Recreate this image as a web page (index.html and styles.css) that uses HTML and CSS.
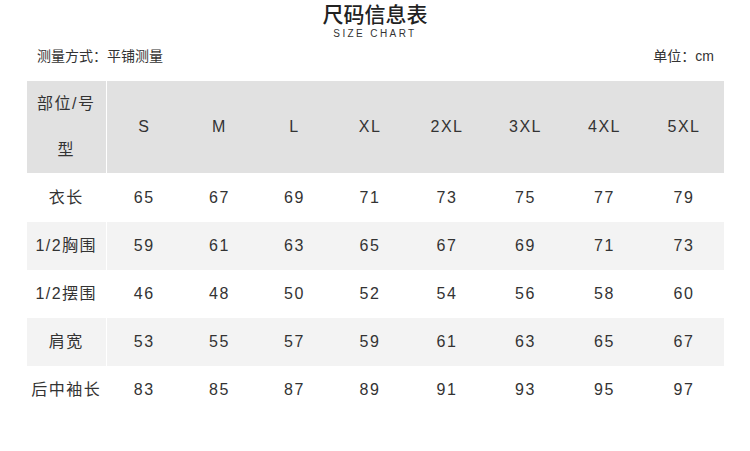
FILE: index.html
```html
<!DOCTYPE html>
<html lang="zh-CN">
<head>
<meta charset="utf-8">
<title>尺码信息表</title>
<link rel="stylesheet" href="styles.css">
</head>
<body>
<div class="page">
  <header class="head">
    <h1 class="title">尺码信息表</h1>
    <div class="subtitle">SIZE CHART</div>
  </header>
  <div class="meta">
    <span>测量方式：平铺测量</span>
    <span>单位：cm</span>
  </div>
  <table class="chart">
    <colgroup>
      <col class="c-label"><col class="c-s"><col class="c-m"><col class="c-l"><col class="c-xl"><col class="c-2xl"><col class="c-3xl"><col class="c-4xl"><col class="c-5xl">
    </colgroup>
    <thead>
      <tr>
        <th class="label">部位/号<br>型</th>
        <th>S</th><th>M</th><th>L</th><th>XL</th><th>2XL</th><th>3XL</th><th>4XL</th><th>5XL</th>
      </tr>
    </thead>
    <tbody>
      <tr><td class="label">衣长</td><td>65</td><td>67</td><td>69</td><td>71</td><td>73</td><td>75</td><td>77</td><td>79</td></tr>
      <tr><td class="label">1/2胸围</td><td>59</td><td>61</td><td>63</td><td>65</td><td>67</td><td>69</td><td>71</td><td>73</td></tr>
      <tr><td class="label">1/2摆围</td><td>46</td><td>48</td><td>50</td><td>52</td><td>54</td><td>56</td><td>58</td><td>60</td></tr>
      <tr><td class="label">肩宽</td><td>53</td><td>55</td><td>57</td><td>59</td><td>61</td><td>63</td><td>65</td><td>67</td></tr>
      <tr><td class="label">后中袖长</td><td>83</td><td>85</td><td>87</td><td>89</td><td>91</td><td>93</td><td>95</td><td>97</td></tr>
    </tbody>
  </table>
</div>
</body>
</html>
```
FILE: styles.css
```css
html, body {
  margin: 0;
  padding: 0;
  background: #fff;
}
body {
  font-family: "Liberation Sans", "Noto Sans CJK SC", sans-serif;
  color: #333;
}
.page {
  width: 750px;
  height: 451px;
  overflow: hidden;
}
.head {
  display: flex;
  flex-direction: column;
  align-items: center;
  padding-top: 1px;
}
.title {
  margin: 0;
  font-family: "Noto Sans CJK SC", sans-serif;
  font-size: 21px;
  font-weight: 500;
  line-height: 24px;
  color: #222;
}
.subtitle {
  margin-top: 3px;
  font-size: 10px;
  line-height: 12px;
  letter-spacing: 2.4px;
  color: #333;
}
.meta {
  display: flex;
  justify-content: space-between;
  margin: 6px 36px 0 37px;
  font-size: 14px;
  line-height: 20px;
  color: #333;
}
.chart {
  margin: 15px 0 0 27px;
  width: 697px;
  table-layout: fixed;
  border-collapse: collapse;
  border-spacing: 0;
  font-size: 16px;
  letter-spacing: 1.5px;
  color: #333;
}
.c-label { width: 79px; }
.c-s { width: 76px; }
.c-m { width: 75px; }
.c-l { width: 75px; }
.c-xl { width: 76px; }
.c-2xl { width: 78px; }
.c-3xl { width: 79px; }
.c-4xl { width: 79px; }
.c-5xl { width: 80px; }
.chart th,
.chart td {
  padding: 0;
  text-align: center;
  font-weight: 400;
}
.chart thead tr {
  background: #e1e1e1;
}
.chart th {
  line-height: 46px;
  border-bottom: 1px solid #fff;
}
.chart td {
  height: 48px;
  line-height: 20px;
}
.chart tbody tr:nth-child(even) {
  background: #f3f3f3;
}
.chart .label {
  border-right: 1px solid #fff;
}
```
